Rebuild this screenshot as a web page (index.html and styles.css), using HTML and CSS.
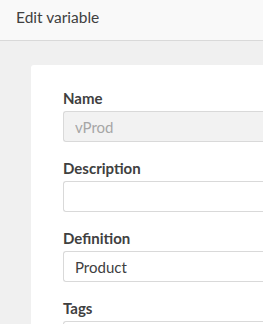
FILE: index.html
```html
<!DOCTYPE html>
<html lang="en">
<head>
    <meta charset="UTF-8">
    <meta name="viewport" content="width=device-width, initial-scale=1.0">
    <title>Edit variable</title>
    <link rel="stylesheet" href="styles.css">
</head>
<body>
    <header class="dialog-header">
        <h1>Edit variable</h1>
    </header>

    <main class="dialog-body">
        <form class="card">
            <div class="field">
                <label for="name">Name</label>
                <input id="name" class="input" type="text" value="vProd" disabled>
            </div>
            <div class="field">
                <label for="description">Description</label>
                <input id="description" class="input" type="text">
            </div>
            <div class="field">
                <label for="definition">Definition</label>
                <input id="definition" class="input" type="text" value="Product">
            </div>
            <div class="field">
                <label for="tags">Tags</label>
                <input id="tags" class="input" type="text">
            </div>
        </form>
    </main>
</body>
</html>
```

FILE: styles.css
```css
* {
    box-sizing: border-box;
    margin: 0;
    padding: 0;
}

html, body {
    height: 100%;
}

body {
    font-family: Lato, 'Open Sans', 'Liberation Sans', sans-serif;
    color: #404040;
    background: #f0f0f0;
    overflow: hidden;
    display: flex;
    flex-direction: column;
}

.dialog-header {
    height: 41px;
    flex-shrink: 0;
    background: #f9f9f9;
    border-bottom: 1px solid #d9d9d9;
    display: flex;
    align-items: center;
    padding: 0 16px 7px;
}

.dialog-header h1 {
    font-size: 15.5px;
    font-weight: 400;
    color: #404040;
}

.dialog-body {
    flex: 1;
    min-height: 0;
    display: flex;
    padding: 24px 0 0 31px;
}

.card {
    flex: 1;
    overflow: hidden;
    background: #ffffff;
    border-radius: 3px 0 0 0;
    padding: 23px 0 0 32px;
}

.field {
    display: flex;
    flex-direction: column;
    gap: 3px;
    margin-bottom: 16px;
}

.field label {
    font-size: 15px;
    line-height: 20px;
    font-weight: 700;
    color: #404040;
}

.input {
    height: 31px;
    width: 100%;
    border: 1px solid #d9d9d9;
    border-right: none;
    border-radius: 3px 0 0 3px;
    background: #ffffff;
    padding: 0 11px;
    font-family: inherit;
    font-size: 15px;
    color: #404040;
    outline: none;
}

.input:disabled {
    background: #f2f2f2;
    color: #a6a6a6;
}
```
